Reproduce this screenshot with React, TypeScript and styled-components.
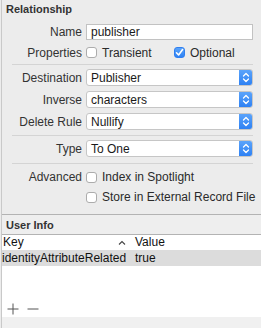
import React from "react";
import styled, { createGlobalStyle } from "styled-components";

const Global = createGlobalStyle`
  html, body { margin: 0; padding: 0; }
  body {
    background: #ececec;
    font-family: "Liberation Sans", Arial, sans-serif;
    color: #2e2e2e;
    -webkit-font-smoothing: antialiased;
  }
`;

const Panel = styled.div`
  width: 260px;
  height: 328px;
  margin-left: 1px;
  border-left: 1px solid #c9c9c9;
  box-sizing: border-box;
  display: flex;
  flex-direction: column;
  background: #ececec;
  overflow: hidden;
`;

const Title = styled.div`
  height: 24px;
  line-height: 18px;
  padding-left: 4px;
  font-size: 11px;
  font-weight: bold;
  color: #333;
`;

const Row = styled.div<{ $h: number; $mt?: number }>`
  display: grid;
  grid-template-columns: 80px 167px;
  column-gap: 4px;
  align-items: center;
  height: ${(p) => p.$h}px;
  margin-top: ${(p) => p.$mt ?? 0}px;
`;

const Label = styled.div`
  text-align: right;
  font-size: 12px;
  color: #333;
`;

const TextField = styled.div`
  height: 16px;
  box-sizing: border-box;
  border: 1px solid #c2c2c2;
  background: #fff;
  font-size: 12px;
  line-height: 14px;
  padding-left: 4px;
  color: #1a1a1a;
`;

const Checks = styled.div`
  display: flex;
  align-items: center;
`;

const CheckItem = styled.div<{ $w?: number }>`
  display: flex;
  align-items: center;
  gap: 5px;
  font-size: 12px;
  color: #2a2a2a;
  width: ${(p) => (p.$w ? `${p.$w}px` : "auto")};
  white-space: nowrap;
`;

const Box = styled.span<{ $on?: boolean }>`
  width: 11px;
  height: 11px;
  box-sizing: border-box;
  border-radius: 3px;
  border: 1px solid ${(p) => (p.$on ? "#2f7ff0" : "#acacac")};
  background: ${(p) => (p.$on ? "linear-gradient(#5aa4fb, #2e82f4)" : "#fff")};
  display: inline-flex;
  align-items: center;
  justify-content: center;
  flex: none;
`;

const Separator = styled.div<{ $mt: number }>`
  height: 1px;
  margin: ${(p) => p.$mt}px 8px 0 10px;
  background: #d4d4d4;
`;

const Popup = styled.div`
  height: 17px;
  box-sizing: border-box;
  border: 1px solid #c6c6c6;
  border-radius: 3px;
  background: #fff;
  display: flex;
  align-items: center;
  font-size: 12px;
  overflow: hidden;
`;

const PopupText = styled.span`
  flex: 1;
  padding-left: 4px;
  color: #1a1a1a;
`;

const Stepper = styled.span`
  width: 14px;
  height: 17px;
  margin: -1px -1px -1px 0;
  border-radius: 0 3px 3px 0;
  background: linear-gradient(#5ea6fb, #2b7ff3);
  display: flex;
  align-items: center;
  justify-content: center;
`;

const InfoLine = styled.div<{ $mt?: number }>`
  height: 1px;
  background: #b3b3b3;
  margin-top: ${(p) => p.$mt ?? 0}px;
`;

const InfoHeader = styled.div`
  height: 19px;
  line-height: 21px;
  padding-left: 4px;
  font-size: 11px;
  font-weight: bold;
  color: #333;
  background: #eeeeee;
`;

const Table = styled.div`
  background: #fff;
  height: 82px;
  display: flex;
  flex-direction: column;
`;

const TableRow = styled.div<{ $sel?: boolean }>`
  display: grid;
  grid-template-columns: 130px 1fr;
  height: ${(p) => (p.$sel ? 16 : 15)}px;
  line-height: ${(p) => (p.$sel ? 16 : 15)}px;
  font-size: 12px;
  color: #111;
  background: ${(p) => (p.$sel ? "#dcdcdc" : "transparent")};
`;

const Cell = styled.div<{ $pl: number; $pr?: number }>`
  padding-left: ${(p) => p.$pl}px;
  padding-right: ${(p) => p.$pr ?? 0}px;
  display: flex;
  align-items: center;
  justify-content: space-between;
  white-space: nowrap;
`;

const Footer = styled.div`
  margin-top: auto;
  height: 16px;
  display: flex;
  align-items: center;
  gap: 8px;
  padding-left: 5px;
  margin-bottom: 0px;
`;

const BottomStrip = styled.div`
  flex: 1;
  background: #f0f0f0;
`;

const Check = () => (
  <svg width="9" height="9" viewBox="0 0 9 9">
    <path d="M1.5 4.8 L3.6 7 L7.6 1.6" fill="none" stroke="#fff" strokeWidth="1.6" strokeLinecap="round" strokeLinejoin="round" />
  </svg>
);

const Chevrons = () => (
  <svg width="8" height="11" viewBox="0 0 8 11">
    <path d="M1.5 4 L4 1.5 L6.5 4 M1.5 7 L4 9.5 L6.5 7" fill="none" stroke="#fff" strokeWidth="1.3" strokeLinecap="round" strokeLinejoin="round" />
  </svg>
);

const PopupField = ({ value }: { value: string }) => (
  <Popup>
    <PopupText>{value}</PopupText>
    <Stepper>
      <Chevrons />
    </Stepper>
  </Popup>
);

const SortUp = () => (
  <svg width="8" height="6" viewBox="0 0 8 6">
    <path d="M1 4.5 L4 1.5 L7 4.5" fill="none" stroke="#444" strokeWidth="1.1" />
  </svg>
);

const Plus = () => (
  <svg width="12" height="12" viewBox="0 0 12 12">
    <path d="M6 0.5 V11.5 M0.5 6 H11.5" stroke="#555" strokeWidth="1" />
  </svg>
);

const Minus = () => (
  <svg width="12" height="12" viewBox="0 0 12 12">
    <path d="M0.5 6 H11.5" stroke="#555" strokeWidth="1" />
  </svg>
);

export default function App() {
  return (
    <>
      <Global />
      <Panel>
        <Title>Relationship</Title>
        <Row $h={16}>
          <Label>Name</Label>
          <TextField>publisher</TextField>
        </Row>
        <Row $h={23} $mt={1}>
          <Label>Properties</Label>
          <Checks>
            <CheckItem $w={88}>
              <Box />
              Transient
            </CheckItem>
            <CheckItem>
              <Box $on>
                <Check />
              </Box>
              Optional
            </CheckItem>
          </Checks>
        </Row>
        <Separator $mt={0} />
        <Row $h={17} $mt={4}>
          <Label>Destination</Label>
          <PopupField value="Publisher" />
        </Row>
        <Row $h={17} $mt={5}>
          <Label>Inverse</Label>
          <PopupField value="characters" />
        </Row>
        <Row $h={17} $mt={5}>
          <Label>Delete Rule</Label>
          <PopupField value="Nullify" />
        </Row>
        <Separator $mt={5} />
        <Row $h={17} $mt={4}>
          <Label>Type</Label>
          <PopupField value="To One" />
        </Row>
        <Separator $mt={6} />
        <Row $h={20} $mt={3}>
          <Label>Advanced</Label>
          <CheckItem>
            <Box />
            Index in Spotlight
          </CheckItem>
        </Row>
        <Row $h={20}>
          <Label />
          <CheckItem>
            <Box />
            Store in External Record File
          </CheckItem>
        </Row>
        <InfoLine $mt={7} />
        <InfoHeader>User Info</InfoHeader>
        <InfoLine />
        <Table>
          <TableRow>
            <Cell $pl={1} $pr={6}>
              Key
              <SortUp />
            </Cell>
            <Cell $pl={3}>Value</Cell>
          </TableRow>
          <TableRow $sel>
            <Cell $pl={0}>identityAttributeRelated</Cell>
            <Cell $pl={3}>true</Cell>
          </TableRow>
          <Footer>
            <Plus />
            <Minus />
          </Footer>
        </Table>
        <BottomStrip />
      </Panel>
    </>
  );
}
